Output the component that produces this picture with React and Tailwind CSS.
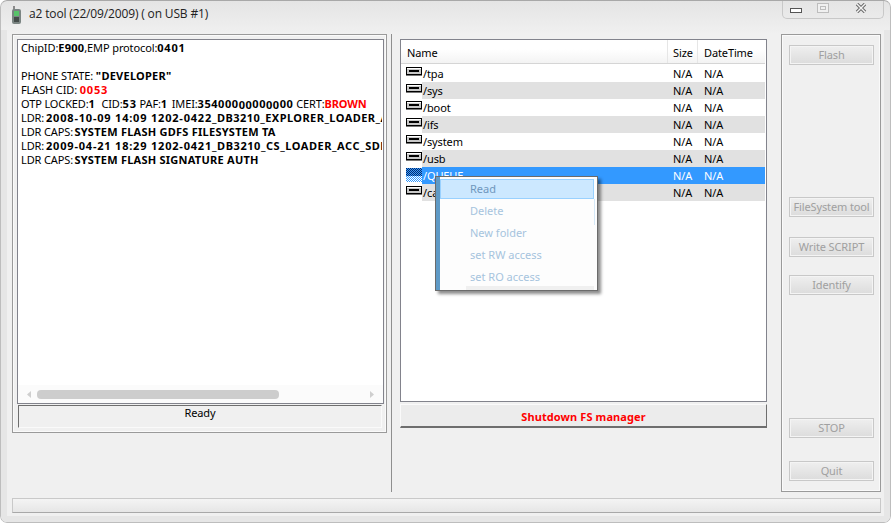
const B = ({ children }) => <b className="font-bold tracking-[0.25px]">{children}</b>;
const D = ({ children }) => <b className="font-bold tracking-[0.8px]">{children}</b>;
const M = ({ children, low }) => <b className={"font-bold tracking-[0.55px] " + (low ? "relative top-[1px]" : "")}>{children}</b>;

function Btn({ children, className = "" }) {
  return (
    <button className={"w-[85px] h-[20px] pb-[1px] flex items-center justify-center border border-[#c8c8c8] bg-gradient-to-b from-[#efefef] to-[#dcdcdc] text-[#a0a0a0] text-[11px] leading-none shadow-[inset_0_0_0_1px_#f4f4f4] " + className}>
      {children}
    </button>
  );
}

const DriveIcon = ({ selected }) =>
  selected ? (
    <svg width="16" height="14" viewBox="0 0 16 14" className="shrink-0 mt-[1px]" shapeRendering="crispEdges">
      <defs>
        <pattern id="dith" width="2" height="2" patternUnits="userSpaceOnUse">
          <rect width="2" height="2" fill="#3399ff" />
          <rect width="1" height="1" fill="#0a2a66" />
          <rect x="1" y="1" width="1" height="1" fill="#0a2a66" />
        </pattern>
        <pattern id="dith2" width="2" height="2" patternUnits="userSpaceOnUse">
          <rect width="2" height="2" fill="#ffffff" />
          <rect width="1" height="1" fill="#3399ff" />
          <rect x="1" y="1" width="1" height="1" fill="#3399ff" />
        </pattern>
      </defs>
      <rect width="16" height="8" fill="url(#dith)" />
      <rect y="8" width="16" height="6" fill="url(#dith2)" />
    </svg>
  ) : (
    <svg width="16" height="9" viewBox="0 0 16 9" className="shrink-0 mt-[2px]" shapeRendering="crispEdges">
      <rect x="0" y="0" width="16" height="8" fill="#000" />
      <rect x="1" y="1" width="14" height="1" fill="#fff" />
      <rect x="1" y="2" width="14" height="5" fill="#c8c8c8" />
      <rect x="3" y="3" width="10" height="2" fill="#000" />
      <rect x="0" y="8" width="16" height="1" fill="#777" />
    </svg>
  );

const rows = ["/tpa", "/sys", "/boot", "/ifs", "/system", "/usb", "/QUEUE", "/cache"];

export default function App() {
  return (
    <div className="w-[891px] h-[523px] bg-[#f0f0f0] text-black text-[11px] leading-[14px] tracking-[-0.12px] relative overflow-hidden flex flex-col rounded-[7px]" style={{ fontFamily: "'Noto Sans','DejaVu Sans',sans-serif" }}>
      {/* title bar */}
      <div className="h-[34px] shrink-0 flex items-start bg-gradient-to-b from-[#e4e4e4] to-[#f0f0f0]">
        <svg width="10" height="18" viewBox="0 0 10 18" className="ml-[12px] mt-[6px]">
          <rect x="1" y="0" width="2" height="4" fill="#8a8a8a" />
          <rect x="0" y="3" width="9" height="15" rx="2" fill="#7b8583" />
          <rect x="2" y="5" width="5" height="5" fill="#58c46a" />
          <rect x="2" y="11" width="5" height="5" fill="#444c4a" />
        </svg>
        <span className="ml-[7px] mt-[6px] text-[12px] leading-[16px] tracking-[-0.15px] text-[#222]" style={{ fontFamily: "'Open Sans',sans-serif" }}>a2 tool (22/09/2009) ( on USB #1)</span>
        <div className="ml-auto mr-[7px] w-[102px] h-[19px] border border-t-0 border-[#c8c8c8] rounded-b-[5px] flex items-center">
          <svg width="12" height="5" viewBox="0 0 12 5" className="ml-[7px] mt-[3px]" shapeRendering="crispEdges">
            <rect x="0.5" y="0.5" width="11" height="4" fill="#fff" stroke="#555" />
          </svg>
          <svg width="12" height="10" viewBox="0 0 12 10" className="ml-[15px] -mt-[3px]" shapeRendering="crispEdges">
            <rect x="0.5" y="0.5" width="11" height="9" fill="#f0f0f0" stroke="#bdbdbd" />
            <rect x="3.5" y="3.5" width="5" height="3" fill="none" stroke="#bdbdbd" />
          </svg>
          <svg width="12" height="10" viewBox="0 0 12 10" className="ml-[26px] -mt-[3px]">
            <path d="M2 1 L10 9 M10 1 L2 9" stroke="#6a6a6a" strokeWidth="3.4" />
            <path d="M2 1 L10 9 M10 1 L2 9" stroke="#f4f4f4" strokeWidth="1.4" />
          </svg>
        </div>
      </div>

      {/* main */}
      <div className="flex-1 flex min-h-0 pl-[12px]">
        {/* left group */}
        <div className="w-[375px] h-[399px] border border-[#9a9a9a] pt-[4px] px-[4px] flex flex-col shadow-[inset_0_0_0_1px_#fafafa]">
          <div className="w-[367px] h-[365px] border border-[#82838c] bg-white relative overflow-hidden pl-[3px] pt-[1px] whitespace-nowrap flex flex-col">
            <div className="h-[14px]">ChipID:<B>E900</B>,EMP protocol:<D>0401</D></div>
            <div className="h-[14px]" />
            <div className="h-[14px]">PHONE STATE: <B>"DEVELOPER"</B></div>
            <div className="h-[14px]">FLASH CID: <b className="font-bold tracking-[0.8px] text-[#ff0000]">0053</b></div>
            <div className="h-[14px]">OTP LOCKED:<D>1</D> <span className="ml-[3px]">CID:</span><D>53</D> PAF:<D>1</D> <span className="ml-[1px]">IMEI:</span><M>354000</M><M low>00</M><M>00</M><M low>00</M><M>00</M> CERT:<b className="font-bold text-[#ff0000]">BROWN</b></div>
            <div className="h-[14px] w-[361px] overflow-hidden">LDR:<D>&#8202;2008-10-09 14:09 1202-0422</D><b className="font-bold tracking-[0.45px]">_DB3210_EXPLORER_LOADER_A</b></div>
            <div className="h-[14px]">LDR CAPS:<B>&#8202;SYSTEM FLASH GDFS FILESYSTEM TA</B></div>
            <div className="h-[14px] w-[361px] overflow-hidden">LDR:<D>&#8202;2009-04-21 18:29 1202-0421</D><b className="font-bold tracking-[0.55px]">_DB3210_CS_LOADER_ACC_SDK</b></div>
            <div className="h-[14px]">LDR CAPS:<B>&#8202;SYSTEM FLASH SIGNATURE AUTH</B></div>
            {/* scrollbar */}
            <div className="absolute left-0 right-0 bottom-0 h-[18px] bg-[#fbfbfb] flex items-center px-[9px]">
              <svg width="5" height="7" viewBox="0 0 5 7"><path d="M4 0 L0 3.5 L4 7 Z" fill="#cfcfcf" /></svg>
              <div className="ml-[5px] w-[242px] h-[9px] rounded-[4px] bg-[#cdcdcd]" />
              <svg width="5" height="7" viewBox="0 0 5 7" className="ml-auto"><path d="M1 0 L5 3.5 L1 7 Z" fill="#cfcfcf" /></svg>
            </div>
          </div>
          <div className="mt-[1px] ml-[1px] w-[364px] h-[23px] border-l border-t border-[#6e6e6e] border-r-[#fafafa] border-r border-b border-b-[#fafafa] text-center">Ready</div>
        </div>

        {/* divider */}
        <div className="ml-[4px] w-[1px] h-[458px] bg-[#8f8f8f]" />

        {/* list */}
        <div className="ml-[8px] w-[367px] pt-[5px] flex flex-col">
          <div className="w-[367px] h-[363px] border border-[#82838c] bg-white relative">
            <div className="h-[24px] flex border-b border-[#d5d5d5] mr-[1px] bg-gradient-to-b from-white from-40% to-[#f3f3f3]">
              <div className="w-[267px] pl-[6px] pt-[6px] border-r border-[#e6e6e6]">Name</div>
              <div className="w-[30px] pl-[5px] pt-[6px] border-r border-[#e6e6e6]">Size</div>
              <div className="flex-1 pl-[6px] pt-[6px]">DateTime</div>
            </div>
            <div className="pt-[1px]">
              {rows.map((r, i) => {
                const sel = i === 6;
                return (
                  <div key={r} className="flex h-[17px] pl-[5px]">
                    <DriveIcon selected={sel} />
                    <div className={"flex-1 mr-[1px] flex items-center " + (sel ? "bg-[#3399ff] text-white " : i % 2 ? "bg-[#e1e1e1] " : "")}>
                      <span className="pl-[1px] w-[251px]">{r}</span>
                      <span className="w-[31px]">N/A</span>
                      <span>N/A</span>
                    </div>
                  </div>
                );
              })}
            </div>
          </div>
          <button className="mt-[2px] w-[367px] h-[24px] pt-[3px] bg-[#ececec] border border-[#fafafa] border-r-[#6e6e6e] border-b-[#6e6e6e] border-b-2 text-[#ff0000] font-bold tracking-[0.1px] text-[11px]">Shutdown FS manager</button>
        </div>

        {/* buttons */}
        <div className="ml-[14px] w-[100px] h-[458px] border border-[#9a9a9a] pl-[7px] pt-[10px] flex flex-col shadow-[inset_0_0_0_1px_#fafafa]">
          <Btn>Flash</Btn>
          <Btn className="mt-[132px]">FileSystem tool</Btn>
          <Btn className="mt-[20px]">Write SCRIPT</Btn>
          <Btn className="mt-[18px]">Identify</Btn>
          <Btn className="mt-[123px]">STOP</Btn>
          <Btn className="mt-[23px]">Quit</Btn>
        </div>
      </div>

      {/* bottom bar */}
      <div className="shrink-0 mx-[12px] mb-[10px] mt-[6px] w-[869px] h-[15px] border border-[#c9c9c9] border-b-[#a8a8a8] bg-gradient-to-b from-[#f4f4f4] to-[#e6e6e6]" />

      {/* context menu */}
      <div className="absolute left-[435px] top-[176px] w-[163px] h-[115px] border border-[#6b6b6b] bg-[#fdfdfd] shadow-[3px_3px_3px_rgba(0,0,0,0.45)] flex text-[#a6c4dd] tracking-normal">
        <div className="w-[4px] bg-[#5f9ac6]" />
        <div className="flex-1 pt-[2px] text-[11px] pr-[3px] relative">
          <div className="h-[20px] bg-[#cce8ff] border border-[#99d1ff] pl-[29px] flex items-center text-[#6f97bd]">Read</div>
          <div className="h-[22px] mt-[1px] pl-[30px] flex items-center">Delete</div>
          <div className="h-[22px] pl-[30px] flex items-center">New folder</div>
          <div className="h-[22px] pl-[30px] flex items-center">set RW access</div>
          <div className="h-[22px] pl-[30px] flex items-center">set RO access</div>
          <div className="absolute right-[2px] top-[22px] w-[1px] h-[26px] bg-[#d5e8f7]" />
          <div className="absolute left-[26px] right-[3px] bottom-0 h-[4px] bg-[#f0f0f0]" />
        </div>
      </div>

      {/* window frame edge (decorative overlay) */}
      <div className="absolute inset-0 rounded-[7px] border border-[#bdbdbd] border-t-[#a8a8a8] pointer-events-none" />
      <div className="absolute left-[1px] right-[1px] bottom-[1px] top-[30px] border-x-[6px] border-b-[6px] border-[#e6e6e6] rounded-b-[6px] pointer-events-none" />
    </div>
  );
}
